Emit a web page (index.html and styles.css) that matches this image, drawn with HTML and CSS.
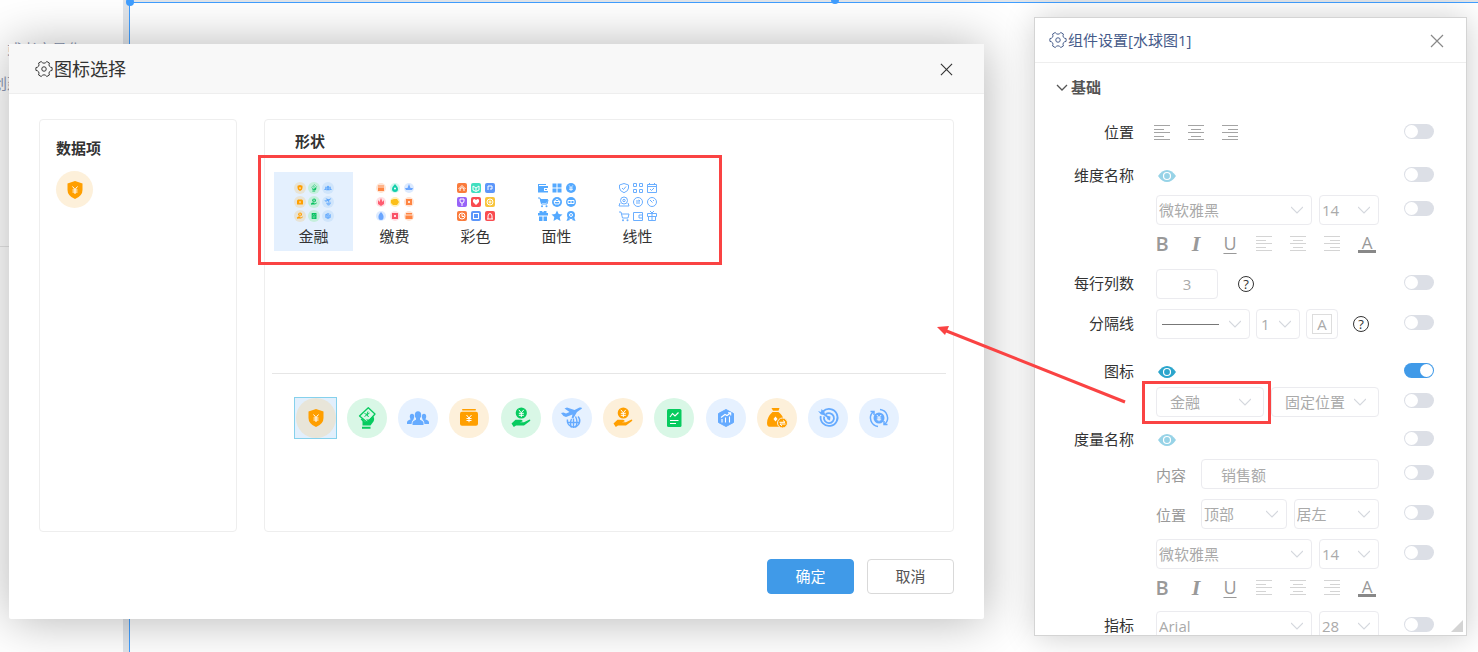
FILE: index.html
```html
<!DOCTYPE html>
<html lang="zh-CN">
<head>
    <meta charset="UTF-8">
    <meta name="viewport" content="width=device-width, initial-scale=1.0">
    <title>图标选择</title>
    <link rel="stylesheet" href="styles.css">
</head>
<body>

<!-- icon sprite -->
<svg class="sprite" aria-hidden="true">
    <symbol id="gear" viewBox="0 0 24 24">
        <path d="M22.8 13.8Q17.2 14.8 19.2 20L15.8 22Q12 17.400 8.200 22L4.800 20Q6.800 14.800 1.200 13.800V10.200Q6.800 9.200 4.800 4L8.200 2Q12 6.600 15.800 2L19.200 4Q17.200 9.200 22.800 10.200Z" fill="none" stroke="currentColor" stroke-width="1.300" stroke-linejoin="round"/>
        <circle cx="12" cy="12" r="3" fill="none" stroke="currentColor" stroke-width="1.300"/>
    </symbol>
    <symbol id="close" viewBox="0 0 14 14">
        <path d="M1 1L13 13M13 1L1 13" fill="none" stroke="currentColor" stroke-width="1.2"/>
    </symbol>
    <symbol id="eye" viewBox="0 0 18 12">
        <path d="M0 6Q4 0 9 0T18 6Q14 12 9 12T0 6Z" fill="currentColor"/>
        <circle cx="9" cy="6" r="3.5" fill="none" stroke="#fff" stroke-width="1.2"/>
    </symbol>
    <symbol id="left" viewBox="0 0 16 16">
        <path d="M0 .5H16M0 4.5H10M0 7.500H16M0 11.500H10M0 14.500H16" stroke="currentColor"/>
    </symbol>
    <symbol id="center" viewBox="0 0 16 16">
        <path d="M0 .5H16M3 4.500H13M0 7.500H16M3 11.500H13M0 14.500H16" stroke="currentColor"/>
    </symbol>
    <symbol id="right" viewBox="0 0 16 16">
        <path d="M0 .5H16M6 4.500H16M0 7.500H16M6 11.500H16M0 14.500H16" stroke="currentColor"/>
    </symbol>
    <symbol id="yen" viewBox="0 0 8 8">
        <path d="M1.5 .5L4 3.5L6.5 .5M4 3.5V8M1.5 4H6.5M1.5 6H6.5" fill="none" stroke="currentColor"/>
    </symbol>

    <symbol id="shield" viewBox="0 0 24 24">
        <path d="M12 3L19.500 5.500V12Q19.500 18 12 21Q4.500 18 4.500 12V5.500Z" fill="currentColor"/>
        <use href="#yen" x="8" y="8" width="8" height="8" color="#fff"/>
    </symbol>
    <symbol id="cash" viewBox="0 0 24 24">
        <path d="M13.3 1.7L20 8L12.5 16.5L4.5 10Z" fill="none" stroke="currentColor" stroke-width="1.3" stroke-linejoin="round"/>
        <path d="M9.500 7.500L12 8.500L13 5.500M9.500 10.500L14.500 7M12 8.500L13.500 11" fill="none" stroke="currentColor"/>
        <path d="M14 13.500L18 10Q20 12.500 18.500 15.500L15.500 19.500H7.500V15.500L5.500 13L7 12.500L10 15.500H13L11 13.500ZM7 20.700H15.500V22.700H7Z" fill="currentColor"/>
    </symbol>
    <symbol id="people" viewBox="0 0 24 24">
        <g fill="currentColor">
            <ellipse cx="12" cy="9" rx="3.2" ry="3.8"/>
            <ellipse cx="6" cy="10.5" rx="2.2" ry="2.8"/>
            <ellipse cx="18" cy="10.5" rx="2.2" ry="2.8"/>
            <path d="M6.5 19V17Q6.5 15 10 13.7V11H14V13.700Q17.500 15 17.500 17V19ZM1 18V16.500Q1 14.500 4.500 13.500V12H7.500V13.500Q5.500 15 5.500 18ZM23 18V16.500Q23 14.500 19.500 13.500V12H16.500V13.500Q18.500 15 18.500 18Z"/>
        </g>
    </symbol>
    <symbol id="purse" viewBox="0 0 24 24">
        <rect x="5" y="3" width="14" height="1.6" rx=".8" fill="currentColor"/>
        <rect x="3" y="5.700" width="18" height="14" rx="2" fill="currentColor"/>
        <use href="#yen" x="8" y="8.500" width="8" height="8" color="#fff"/>
    </symbol>
    <symbol id="hand" viewBox="0 0 24 24">
        <circle cx="12.300" cy="7" r="5.600" fill="currentColor"/>
        <use href="#yen" x="8.300" y="3.300" width="8" height="8" color="#fff"/>
        <path d="M2.500 17.500L6.500 13.800H12Q14 14 13.500 15.500L11 16.300H15L20.500 13.500Q22 13.700 21 15L15 19.500H7L4.800 21Z" fill="currentColor"/>
    </symbol>
    <symbol id="plane" viewBox="0 0 24 24">
        <path d="M1 7L3.500 6.500L6 7.500L9.500 6L4.500 2.500L7 1.500L14.500 4L19.500 1.500Q22 1 22 2.500L17 6L13.500 12L11.500 12.500L12.500 8.500L6 11Q3 10.500 1 7Z" fill="currentColor"/>
        <g fill="none" stroke="currentColor" stroke-width="1.400">
            <path d="M18 10.500A6.200 6.200 0 1 1 7.500 13.500"/>
            <path d="M13.500 12.500V22M8 16.500H19.500M11.500 13Q9.500 17 11.500 21.500M15.500 10.500Q18.500 16 15.500 21.500"/>
        </g>
    </symbol>
    <symbol id="report" viewBox="0 0 24 24">
        <rect x="5" y="3" width="14.500" height="18" rx="1.500" fill="currentColor"/>
        <path d="M8 11L10.500 7.500L13 10L16.500 6.500M8 14.500H16.500M8 17.500H14" fill="none" stroke="#fff" stroke-width="1.100"/>
    </symbol>
    <symbol id="hexagon" viewBox="0 0 24 24">
        <path d="M12 3.500L19.500 7.500V16.500L12 20.500L4.500 16.500V7.500Z" fill="currentColor" stroke="currentColor" stroke-linejoin="round"/>
        <path d="M7 11.500L11 8.500L13 9.500L16.500 7M14 6.700H16.700V9.500M8 16.500V13M11.500 16.500V11.500M15.500 16.500V10.500" fill="none" stroke="#fff" stroke-width="1.100"/>
    </symbol>
    <symbol id="bag" viewBox="0 0 24 24">
        <path d="M6.500 2H14.500L13.500 4.800H8ZM7.500 6H13.500Q18.500 10 19 15L16 20.800H4.500Q2 20.500 2 17Q2 11 7.500 6Z" fill="currentColor"/>
        <path d="M10.500 10.500L12.500 13L10.500 15.500L8.500 13Z" fill="#fff"/>
        <circle cx="17.500" cy="17" r="5" fill="currentColor" stroke="#fdf0da"/>
        <path d="M14.500 16.300H20L18 14.500M20.500 18H15L17 19.800" fill="none" stroke="#fff"/>
    </symbol>
    <symbol id="target" viewBox="0 0 24 24">
        <g fill="none" stroke="currentColor" stroke-width="1.800">
            <path d="M7 5.500A8.500 8.500 0 1 1 4.700 10"/>
            <path d="M9.800 8.200A5 5 0 1 1 8.200 10.500"/>
            <path d="M6 6.500L13 12"/>
        </g>
        <path d="M2 5L5 6L5.500 3L8.500 6V9L5 8.500ZM11 13L14 14.500L14.500 10.500L12 10Z" fill="currentColor"/>
    </symbol>
    <symbol id="exchange" viewBox="0 0 24 24">
        <g fill="none" stroke="currentColor" stroke-width="1.500">
            <path d="M11 20.500A8.500 8.500 0 0 1 6 6M3.500 5.500H7V9"/>
            <path d="M13 3.500A8.500 8.500 0 0 1 18 18M20.500 18.500H17V15"/>
        </g>
        <circle cx="12" cy="12" r="5.500" fill="currentColor"/>
        <use href="#yen" x="8.500" y="8.500" width="7" height="7" color="#fff"/>
    </symbol>
    <symbol id="cart" viewBox="0 0 12 12">
        <path d="M1 2H3L4.500 8H10L11 4H3.500" fill="none" stroke="currentColor"/>
        <circle cx="5" cy="10.300" r="1" fill="currentColor"/><circle cx="9.500" cy="10.300" r="1" fill="currentColor"/>
    </symbol>
</svg>

<div class="page">
    <aside class="sidebar">
        <p>或者变量化</p>
        <p class="shifted">创建</p>
    </aside>
    <div class="gutter"></div>
    <main class="canvas">
        <span class="handle corner"></span>
        <span class="handle top"></span>
    </main>
</div>

<section class="dialog" role="dialog" aria-labelledby="dialog-title">
    <header>
        <svg class="gear"><use href="#gear"/></svg>
        <h1 id="dialog-title">图标选择</h1>
        <button class="close" aria-label="关闭"><svg><use href="#close"/></svg></button>
    </header>

    <div class="dialog-body">
        <div class="box data-items">
            <h2>数据项</h2>
            <button class="round orange" aria-label="数据项图标"><svg><use href="#shield"/></svg></button>
        </div>

        <div class="box shapes">
            <h2>形状</h2>
            <div class="shape-list">
                <button class="shape active">
                    <svg viewBox="0 0 40 40">
                        <g color="#ff9f00">
                            <g fill="#e7e3d6"><circle cx="6" cy="6" r="6"/><circle cx="6" cy="20" r="6"/><circle cx="6" cy="34" r="6"/></g>
                            <use href="#shield" x="2" y="2" width="8" height="8"/>
                            <use href="#purse" x="2" y="16" width="8" height="8"/>
                            <use href="#hand" x="2" y="30" width="8" height="8"/>
                        </g>
                        <g color="#07c160">
                            <g fill="#c5efdc"><circle cx="20" cy="6" r="6"/><circle cx="20" cy="20" r="6"/><circle cx="20" cy="34" r="6"/></g>
                            <use href="#cash" x="16" y="2" width="8" height="8"/>
                            <use href="#hand" x="16" y="16" width="8" height="8"/>
                            <use href="#report" x="16" y="30" width="8" height="8"/>
                        </g>
                        <g color="#5ea7fd">
                            <g fill="#d0e5fb"><circle cx="34" cy="6" r="6"/><circle cx="34" cy="20" r="6"/><circle cx="34" cy="34" r="6"/></g>
                            <use href="#people" x="30" y="2" width="8" height="8"/>
                            <use href="#plane" x="30" y="16" width="8" height="8"/>
                            <use href="#hexagon" x="30" y="30" width="8" height="8"/>
                        </g>
                    </svg>
                    金融
                </button>
                <button class="shape">
                    <svg viewBox="0 0 40 40">
                        <g fill="#ffe3d3"><circle cx="6" cy="6" r="5"/><circle cx="34" cy="20" r="5"/><circle cx="34" cy="34" r="5"/></g>
                        <g fill="#d5f8ef"><circle cx="20" cy="6" r="5"/></g>
                        <g fill="#dceaff"><circle cx="34" cy="6" r="5"/><circle cx="6" cy="34" r="5"/></g>
                        <g fill="#ffdfe3"><circle cx="6" cy="20" r="5"/><circle cx="20" cy="34" r="5"/></g>
                        <circle cx="20" cy="20" r="5" fill="#fff0b8"/>
                        <g fill="#ff8542">
                            <path d="M3 3.500H9V4.500H3ZM3 5.500H9V9H3ZM31 31H37V32.500H31ZM30.500 33.500H37.500V37H30.500Z"/>
                            <path d="M31 17H37V23H31ZM33 19V21H35V19Z" fill-rule="evenodd"/>
                        </g>
                        <path d="M20 2Q23 5 23 7A3 3 0 0 1 17 7Q17 5 20 2Z" fill="#13ceaa"/><circle cx="20" cy="6.500" r="1" fill="#fff"/>
                        <path d="M34 2L35.500 6H38L37 8H31L30 6H32.500ZM6 30Q9 33 8.500 35.500A2.500 2.500 0 0 1 3.500 35.500Q3 33 6 30Z" fill="#69a5ff"/>
                        <path d="M6 16L7.500 20L9 18V22L6 24L3 22V18L4.500 20Z" fill="#ff5c70"/>
                        <path d="M16 18L19 17H22L24 20L22 23H18L16 21Z" fill="#fcbf17"/>
                        <path d="M17 31H23V37H17ZM19 33V35H21V33Z" fill="#fa5267" fill-rule="evenodd"/>
                    </svg>
                    缴费
                </button>
                <button class="shape">
                    <svg viewBox="0 0 40 40">
                        <g fill="#fa7b3c"><rect x="1" y="1" width="10" height="10" rx="2"/><rect x="1" y="29" width="10" height="10" rx="2"/></g>
                        <rect x="15" y="1" width="10" height="10" rx="2" fill="#42dfc0"/>
                        <g fill="#5c96fa"><rect x="29" y="1" width="10" height="10" rx="2"/><rect x="15" y="29" width="10" height="10" rx="2"/></g>
                        <rect x="1" y="15" width="10" height="10" rx="2" fill="#9863f8"/>
                        <g fill="#f94c50"><rect x="15" y="15" width="10" height="10" rx="2"/><rect x="29" y="29" width="10" height="10" rx="2"/></g>
                        <rect x="29" y="15" width="10" height="10" rx="2" fill="#f8c43c"/>
                        <g fill="none" stroke="#fff">
                            <path d="M2.500 7L6 3.500L9.500 7M4 9V7L6 5.500L8 7V9M17 4L20 6L23 4V8L20 9.500L17 8ZM20 6V9M32 8V4H36V7H34M4 17H8V19Q8 21 6 21Q4 21 4 19ZM6 21V24M31 37H37M32 37V34Q32 31.500 34 31.500T36 34V37"/>
                            <circle cx="6" cy="34" r="3"/><path d="M6 32V34.500H8"/>
                            <rect x="17.500" y="31.500" width="5" height="5"/>
                            <circle cx="34" cy="20" r="3"/><circle cx="34" cy="20" r="1"/>
                        </g>
                        <path d="M20 23L17 20Q16.500 17 18.500 17L20 18L21.500 17Q23.500 17 23 20Z" fill="#fff"/>
                    </svg>
                    彩色
                </button>
                <button class="shape">
                    <svg viewBox="0 0 40 40" color="#54a9ff">
                        <g fill="currentColor">
                            <path d="M1 2H9V3H2V4H11V6H7V9H11V10.500H1ZM8 7H10V8H8Z"/>
                            <path d="M15.500 1.500H19.500V5.500H15.500ZM20.500 1.500H24.500V5.500H20.500ZM15.500 6.500H19.500V10.500H15.500ZM20.500 6.500H24.500V10.500H20.500Z"/>
                            <circle cx="34" cy="6" r="5"/><circle cx="20" cy="20" r="5"/><circle cx="34" cy="20" r="5"/>
                            <path d="M3 17H11L9.500 21H4ZM1 31H11V33.500H1ZM2 34.500H5.500V39H2ZM6.500 34.500H10V39H6.500ZM2.500 29H5L6 30.500L7 29H9.500V31H2.500Z"/>
                            <path d="M20 28.500L21.700 32L25.500 32.500L22.700 35L23.500 39L20 37L16.500 39L17.300 35L14.500 32.500L18.300 32Z"/>
                            <circle cx="34" cy="33" r="4"/><path d="M31 35L29.500 39L33 38ZM37 35L38.500 39L35 38Z"/>
                        </g>
                        <use href="#cart" x="0" y="14" width="12" height="12"/>
                        <use href="#yen" x="31" y="3" width="6" height="6" color="#fff"/>
                        <g fill="none" stroke="#fff"><path d="M17 19.500L18 22H22L23 19.500H17L20 17L23 19.500M31 18.500H37V21.500H31ZM33 20H35"/><circle cx="34" cy="33" r="1.500"/></g>
                    </svg>
                    面性
                </button>
                <button class="shape">
                    <svg viewBox="0 0 40 40" color="#6aaeff">
                        <g fill="none" stroke="currentColor">
                            <path d="M6 1.500L10.500 3V6Q10.500 9 6 10.700Q1.500 9 1.500 6V3ZM4 6L5.500 7.500L8 4.500"/>
                            <path d="M15.500 1.500H18.500V4.500H15.500ZM21.500 1.500H24.500V4.500H21.500ZM15.500 7.500H18.500V10.500H15.500ZM21.500 7.500H24.500V10.500H21.500Z"/>
                            <path d="M29.500 2.500H38.500V10.500H29.500ZM29.500 4.500H38.500M31.500 1V3M36.500 1V3M32 7L33.500 8.500L36 6"/>
                            <circle cx="6" cy="18.500" r="3.500"/><circle cx="6" cy="18.500" r="1.200"/><path d="M2 21L1 24H11L10 21"/>
                            <circle cx="20" cy="20" r="4.500"/><path d="M18 19H22L20.500 18M22 21H18"/>
                            <circle cx="34" cy="20" r="4.500"/><path d="M32 18L34.500 20.500M35 18L36 19"/>
                            <path d="M15.500 30.500H24.500V38.500H15.500ZM24.500 33H21V36H24.500"/>
                            <path d="M29.500 31.500H38.500V34.500H29.500ZM30.500 34.500V38.500H37.500V34.500M34 31V38.500M32 29L34 31L36 29"/>
                        </g>
                        <use href="#cart" x="0" y="28" width="12" height="12"/>
                    </svg>
                    线性
                </button>
            </div>

            <hr>

            <div class="icon-list">
                <button class="pick active"><span class="round orange"><svg><use href="#shield"/></svg></span></button>
                <button class="pick"><span class="round green"><svg><use href="#cash"/></svg></span></button>
                <button class="pick"><span class="round blue"><svg><use href="#people"/></svg></span></button>
                <button class="pick"><span class="round orange"><svg><use href="#purse"/></svg></span></button>
                <button class="pick"><span class="round green"><svg><use href="#hand"/></svg></span></button>
                <button class="pick"><span class="round blue"><svg><use href="#plane"/></svg></span></button>
                <button class="pick"><span class="round orange"><svg><use href="#hand"/></svg></span></button>
                <button class="pick"><span class="round green"><svg><use href="#report"/></svg></span></button>
                <button class="pick"><span class="round blue"><svg><use href="#hexagon"/></svg></span></button>
                <button class="pick"><span class="round orange"><svg><use href="#bag"/></svg></span></button>
                <button class="pick"><span class="round blue"><svg><use href="#target"/></svg></span></button>
                <button class="pick"><span class="round blue"><svg><use href="#exchange"/></svg></span></button>
            </div>
        </div>
    </div>

    <footer>
        <button class="btn primary">确定</button>
        <button class="btn">取消</button>
    </footer>
</section>

<section class="settings" role="dialog" aria-labelledby="settings-title">
    <header>
        <svg class="gear"><use href="#gear"/></svg>
        <h1 id="settings-title">组件设置[水球图1]</h1>
        <button class="close" aria-label="关闭"><svg><use href="#close"/></svg></button>
    </header>

    <div class="settings-body">
        <button class="group-title">
            <svg viewBox="0 0 12 8"><path d="M1 1L6 6L11 1" fill="none" stroke="currentColor" stroke-width="1.300"/></svg>
            基础
        </button>

        <div class="row">
            <label for="sw-pos">位置</label>
            <div class="tools dark">
                <button aria-label="左对齐"><svg><use href="#left"/></svg></button>
                <button aria-label="居中"><svg><use href="#center"/></svg></button>
                <button aria-label="右对齐"><svg><use href="#right"/></svg></button>
            </div>
            <input type="checkbox" class="switch" id="sw-pos">
        </div>

        <div class="row gap-lg">
            <label for="sw-dim">维度名称</label>
            <div><button class="eye" aria-label="显示"><svg><use href="#eye"/></svg></button></div>
            <input type="checkbox" class="switch" id="sw-dim">
        </div>
        <div class="row gap-sm">
            <span></span>
            <div class="controls">
                <select class="grow" aria-label="字体"><option>微软雅黑</option></select>
                <select class="size" aria-label="字号"><option>14</option></select>
            </div>
            <input type="checkbox" class="switch" aria-label="字体开关">
        </div>
        <div class="row gap-sm">
            <span></span>
            <div class="tools">
                <button class="bold">B</button>
                <button class="italic">I</button>
                <button class="underline">U</button>
                <button aria-label="左对齐"><svg><use href="#left"/></svg></button>
                <button aria-label="居中"><svg><use href="#center"/></svg></button>
                <button aria-label="右对齐"><svg><use href="#right"/></svg></button>
                <button class="color">A</button>
            </div>
        </div>

        <div class="row gap-md">
            <label for="cols">每行列数</label>
            <div class="controls">
                <input type="text" class="number" id="cols" value="3">
                <button class="help" aria-label="帮助">?</button>
            </div>
            <input type="checkbox" class="switch" aria-label="每行列数开关">
        </div>
        <div class="row gap-md">
            <label for="line">分隔线</label>
            <div class="controls narrow">
                <select class="line" id="line"><option value="solid"></option></select>
                <select class="width" aria-label="线宽"><option>1</option></select>
                <button class="swatch" aria-label="颜色"><span>A</span></button>
                <button class="help" aria-label="帮助">?</button>
            </div>
            <input type="checkbox" class="switch" aria-label="分隔线开关">
        </div>

        <div class="row gap-xl">
            <label for="sw-icon">图标</label>
            <div><button class="eye on" aria-label="显示"><svg><use href="#eye"/></svg></button></div>
            <input type="checkbox" class="switch" id="sw-icon" checked>
        </div>
        <div class="row">
            <span></span>
            <div class="controls">
                <select class="grow padded" aria-label="图标"><option>金融</option></select>
                <select class="grow padded" aria-label="图标位置"><option>固定位置</option></select>
            </div>
            <input type="checkbox" class="switch" aria-label="图标样式开关">
        </div>

        <div class="row gap">
            <label for="sw-measure">度量名称</label>
            <div><button class="eye" aria-label="显示"><svg><use href="#eye"/></svg></button></div>
            <input type="checkbox" class="switch" id="sw-measure">
        </div>
        <div class="row gap-sm">
            <span></span>
            <div class="controls">
                <label class="sub" for="content">内容</label>
                <input type="text" class="grow" id="content" value="销售额">
            </div>
            <input type="checkbox" class="switch" aria-label="内容开关">
        </div>
        <div class="row gap-md">
            <span></span>
            <div class="controls">
                <label class="sub" for="place">位置</label>
                <select class="grow" id="place"><option>顶部</option></select>
                <select class="grow" aria-label="水平位置"><option>居左</option></select>
            </div>
            <input type="checkbox" class="switch" aria-label="位置开关">
        </div>
        <div class="row gap-md">
            <span></span>
            <div class="controls">
                <select class="grow" aria-label="度量字体"><option>微软雅黑</option></select>
                <select class="size" aria-label="度量字号"><option>14</option></select>
            </div>
            <input type="checkbox" class="switch" aria-label="度量字体开关">
        </div>
        <div class="row gap-sm">
            <span></span>
            <div class="tools">
                <button class="bold">B</button>
                <button class="italic">I</button>
                <button class="underline">U</button>
                <button aria-label="左对齐"><svg><use href="#left"/></svg></button>
                <button aria-label="居中"><svg><use href="#center"/></svg></button>
                <button aria-label="右对齐"><svg><use href="#right"/></svg></button>
                <button class="color">A</button>
            </div>
        </div>

        <div class="row gap">
            <label for="metric">指标</label>
            <div class="controls">
                <select class="grow" id="metric"><option>Arial</option></select>
                <select class="size" aria-label="指标字号"><option>28</option></select>
            </div>
            <input type="checkbox" class="switch" aria-label="指标开关">
        </div>
    </div>
    <span class="resize"></span>
</section>

<!-- callouts -->
<div class="mark mark-shapes"></div>
<div class="mark mark-select"></div>
<svg class="arrow" viewBox="0 0 190 78" aria-hidden="true">
    <path d="M188 76L7 4" stroke="#fa4343" stroke-width="3"/>
    <path d="M0 1L12 0L8 9Z" fill="#fa4343"/>
</svg>

</body>
</html>
```
FILE: styles.css
```css
* {
    margin: 0;
    padding: 0;
    box-sizing: border-box;
}

body {
    height: 100vh;
    overflow: hidden;
    position: relative;
    background: #fff;
    color: #333;
    font-family: "Open Sans", "Noto Sans CJK SC", sans-serif;
    font-size: 15px;
}

button, input, select {
    font: inherit;
    color: inherit;
    background: none;
    border: none;
    outline: none;
}

button {
    cursor: pointer;
}

svg {
    display: block;
}

.sprite {
    position: absolute;
    width: 0;
    height: 0;
}

/* page behind the windows */
.page {
    display: flex;
    height: 100%;
}

.sidebar {
    width: 123px;
    padding: 38px 0 0 7px;
    color: #8d98b3;
    white-space: nowrap;
    background: linear-gradient(#e6e6e6, #e6e6e6) 0 246px / 100% 1px no-repeat;
}

.sidebar p {
    line-height: 22px;
    margin-bottom: 12px;
}

.sidebar .shifted {
    margin-left: -15px;
}

.gutter {
    width: 6px;
    background: #e1e5ea;
}

.canvas {
    flex: 1;
    position: relative;
    border-left: 1px solid #409eff;
    background: linear-gradient(#e1e5ea 2px, #409eff 2px, #409eff 3px, #fff 3px);
}

.handle {
    position: absolute;
    width: 8px;
    height: 8px;
    border-radius: 50%;
    background: #409eff;
}

.handle.corner {
    left: -4px;
    top: -2px;
}

.handle.top {
    left: 701px;
    top: -4px;
}

/* windows */
.dialog, .settings {
    position: absolute;
    display: flex;
    flex-direction: column;
    background: #fff;
}

.dialog header, .settings header {
    display: flex;
    align-items: center;
    gap: 1px;
    flex: none;
    border-bottom: 1px solid #eee;
}

h1 {
    flex: 1;
    font-weight: normal;
    padding-bottom: 1px;
}

.gear {
    width: 18px;
    height: 18px;
}

.close {
    padding-top: 1px;
}

.close svg {
    width: 14px;
    height: 14px;
}

.dialog {
    left: 9px;
    right: 494px;
    top: 44px;
    bottom: 33px;
    border-radius: 2px;
    box-shadow: 1px 1px 50px rgba(0, 0, 0, 0.3);
}

.dialog header {
    height: 50px;
    padding: 0 31px 0 26px;
    background: #f8f8f8;
}

.dialog h1 {
    font-size: 18px;
}

.dialog .close svg {
    width: 13px;
    height: 13px;
}

.dialog-body {
    flex: 1;
    display: flex;
    gap: 27px;
    padding: 25px 30px 0;
}

.box {
    border: 1px solid #eee;
    border-radius: 4px;
}

h2 {
    font-size: 15px;
    line-height: 20px;
    font-weight: bold;
}

.data-items {
    width: 198px;
    padding: 18px 16px;
}

.data-items h2 {
    margin-bottom: 13px;
}

.data-items .round {
    width: 37px;
    height: 37px;
}

.shapes {
    flex: 1;
    display: flex;
    flex-direction: column;
}

.shapes h2 {
    padding: 11px 30px 0;
}

.shape-list {
    display: flex;
    align-items: flex-start;
    gap: 2px;
    height: 203px;
    padding: 21px 9px 0;
    margin-bottom: 19px;
}

.shape {
    width: 79px;
    height: 79px;
    padding-top: 6px;
    line-height: 24px;
}

.shape svg {
    width: 40px;
    height: 40px;
    margin: 0 auto 2px;
}

.shape.active {
    background: #e4f0fe;
}

hr {
    border: none;
    border-top: 1px solid #e6e6e6;
    margin: 0 7px 23px;
}

.icon-list {
    display: flex;
    justify-content: space-between;
    padding: 0 52px 0 29px;
}

.pick {
    width: 43px;
    height: 42px;
    display: flex;
    align-items: center;
    justify-content: center;
    border: 1px solid transparent;
}

.pick.active {
    background: #e2effc;
    border-color: #85d1ec;
}

.round {
    width: 40px;
    height: 40px;
    display: flex;
    align-items: center;
    justify-content: center;
    border-radius: 50%;
}

.round svg {
    width: 24px;
    height: 24px;
}

.orange {
    color: #ff9f00;
    background: #fdf0da;
}

.green {
    color: #07cb5f;
    background: #d9f7e6;
}

.blue {
    color: #66abff;
    background: #e6f1ff;
}

.active .orange {
    background: #e8e5d9;
}

.dialog footer {
    display: flex;
    justify-content: flex-end;
    gap: 13px;
    padding: 27px 30px 25px;
}

.btn {
    width: 87px;
    height: 35px;
    padding-bottom: 2px;
    border: 1px solid #d9d9d9;
    border-radius: 4px;
    color: #555;
}

.btn.primary {
    background: #409ae8;
    border-color: #409ae8;
    color: #fff;
}

/* settings */
.settings {
    right: 11px;
    top: 17px;
    bottom: 16px;
    width: 433px;
    border: 1px solid #d4d4d4;
    box-shadow: 1px 1px 30px rgba(0, 0, 0, 0.2);
}

.settings header {
    height: 45px;
    padding: 0 22px 0 14px;
    color: #465b8a;
}

.settings h1 {
    font-size: 15px;
}

.settings .close {
    color: #888;
}

.settings-body {
    flex: 1;
    min-height: 0;
    overflow: hidden;
}

.group-title {
    display: flex;
    align-items: center;
    gap: 3px;
    height: 24px;
    margin: 11px 0 20px 21px;
    font-weight: bold;
    color: #555;
}

.group-title svg {
    width: 12px;
    height: 8px;
    margin-top: 4px;
}

.row {
    display: grid;
    grid-template-columns: 99px minmax(0, 1fr) 30px;
    column-gap: 21px;
    align-items: center;
    min-height: 30px;
    padding-right: 32px;
}

.row > label {
    text-align: right;
    padding-bottom: 4px;
}

.gap-sm {
    margin-top: 4px;
}

.gap {
    margin-top: 8px;
}

.gap-md {
    margin-top: 10px;
}

.gap-lg {
    margin-top: 13px;
}

.gap-xl {
    margin-top: 18px;
}

.controls {
    display: flex;
    align-items: center;
    gap: 7px;
    padding: 0 4px 0 1px;
    color: #aaa;
}

.controls.narrow {
    gap: 6px;
}

.controls select, .controls input {
    height: 30px;
    min-width: 0;
    border: 1px solid #ebebef;
    border-radius: 4px;
}

.controls select {
    appearance: none;
    padding: 0 2px;
    background: url("data:image/svg+xml,%3Csvg xmlns='http://www.w3.org/2000/svg' width='12' height='8'%3E%3Cpath d='M0 1L6 7L12 1' fill='none' stroke='%23d5d8de' stroke-width='1.200'/%3E%3C/svg%3E") right 8px center no-repeat;
}

.controls .grow {
    flex: 1;
}

.controls .size {
    width: 60px;
}

.controls .padded {
    padding-left: 13px;
    background-position: right 12px center;
}

.controls input.grow {
    padding: 0 19px;
}

.controls .number {
    width: 62px;
    text-align: center;
}

.controls .line {
    width: 94px;
    background-image: url("data:image/svg+xml,%3Csvg xmlns='http://www.w3.org/2000/svg' width='12' height='8'%3E%3Cpath d='M0 1L6 7L12 1' fill='none' stroke='%23d5d8de' stroke-width='1.200'/%3E%3C/svg%3E"), linear-gradient(#777, #777);
    background-position: right 8px center, 5px center;
    background-size: 12px 8px, 57px 1px;
}

.controls .width {
    width: 44px;
    padding-left: 4px;
}

.sub {
    width: 38px;
    color: #999;
}

.swatch {
    width: 32px;
    height: 30px;
    display: flex;
    align-items: center;
    justify-content: center;
    border: 1px solid #ebebef;
    border-radius: 4px;
}

.swatch span {
    width: 20px;
    line-height: 18px;
    border: 1px solid #ddd;
}

.help {
    width: 16px;
    height: 16px;
    margin-left: 9px;
    border: 1px solid #333;
    border-radius: 50%;
    color: #333;
    font-size: 13px;
    line-height: 14px;
}

.controls .number + .help {
    margin-left: 13px;
}

.tools {
    display: flex;
    align-items: center;
    gap: 18px;
    margin-left: -1px;
    color: #999;
}

.tools button {
    width: 16px;
    height: 24px;
    display: flex;
    align-items: center;
    justify-content: center;
    font-size: 20px;
    line-height: 20px;
}

.tools svg {
    width: 16px;
    height: 16px;
    flex: none;
    color: #d4d4d4;
}

.tools.dark svg {
    color: #a4a4a4;
}

.tools .bold {
    font-weight: 600;
}

.tools .italic {
    font-family: "Liberation Serif", serif;
    font-style: italic;
    font-weight: bold;
    font-size: 22px;
}

.tools .underline {
    padding-bottom: 2px;
    font-size: 18px;
    text-decoration: underline;
    text-underline-offset: 3px;
}

.tools .color {
    width: 18px;
    height: 18px;
    border-bottom: 3px solid #888;
    font-size: 17px;
}

.eye {
    display: block;
    margin-left: 3px;
    color: #97d3e7;
}

.eye.on {
    color: #2ba5cc;
}

.eye svg {
    width: 18px;
    height: 12px;
}

.switch {
    appearance: none;
    width: 30px;
    height: 15px;
    padding: 1px;
    margin-bottom: 3px;
    border-radius: 8px;
    background: #dcdfe6;
    cursor: pointer;
}

.switch::before {
    content: "";
    display: block;
    width: 13px;
    height: 13px;
    border-radius: 50%;
    background: #fff;
}

.switch:checked {
    background: #409ae8;
}

.switch:checked::before {
    margin-left: auto;
}

.resize {
    position: absolute;
    right: 3px;
    bottom: 3px;
    border: 6px solid;
    border-color: transparent #d4d4d4 #d4d4d4 transparent;
}

/* callouts */
.mark {
    position: absolute;
    border: 3px solid #fa4343;
    pointer-events: none;
}

.mark-shapes {
    left: 258px;
    top: 155px;
    width: 464px;
    height: 110px;
}

.mark-select {
    right: 207px;
    top: 381px;
    width: 129px;
    height: 43px;
}

.arrow {
    position: absolute;
    right: 351px;
    top: 326px;
    width: 190px;
    height: 78px;
    pointer-events: none;
}
```
